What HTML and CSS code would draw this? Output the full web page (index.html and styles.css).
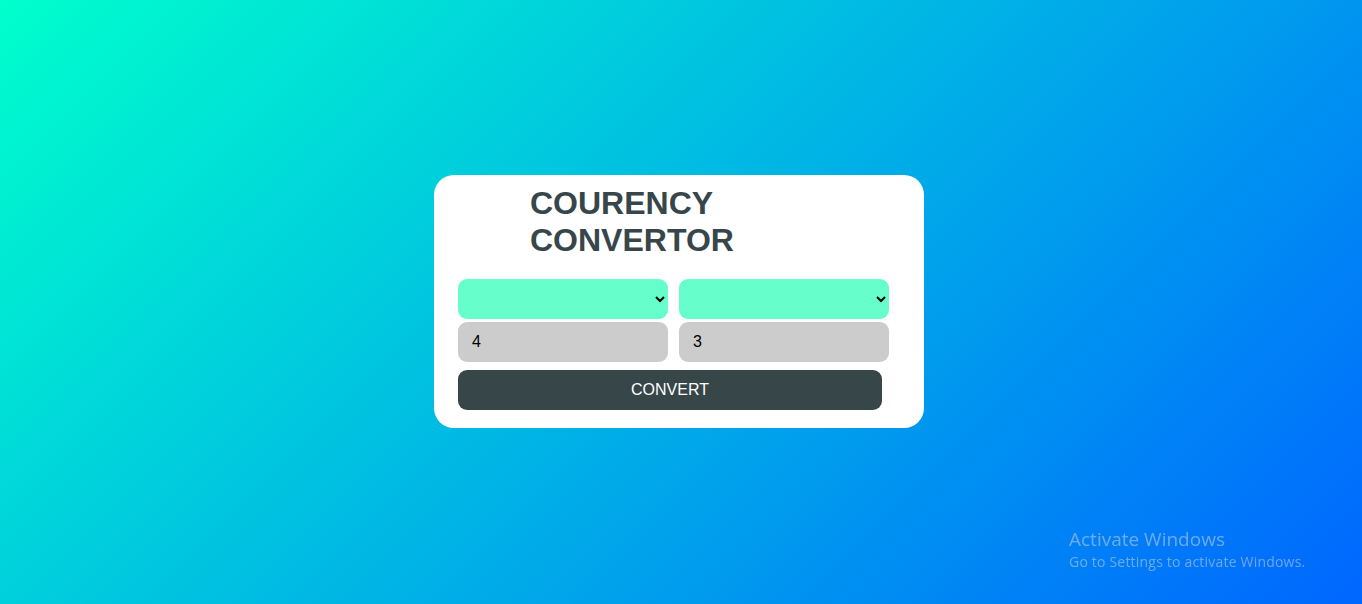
FILE: index.html
```html
<!DOCTYPE html>
<html lang="en">
<head>
<meta charset="utf-8">
<title>Courency Convertor</title>
<link rel="stylesheet" href="styles.css">
</head>
<body>
<main class="page">
  <section class="card">
    <h1 class="title">COURENCY<br>CONVERTOR</h1>
    <div class="row">
      <select class="field select"><option></option></select>
      <select class="field select"><option></option></select>
    </div>
    <div class="row">
      <input class="field input" type="text" value="4">
      <input class="field input" type="text" value="3">
    </div>
    <button class="btn">CONVERT</button>
  </section>
</main>
<div class="activate">
  <div class="act-title">Activate Windows</div>
  <div class="act-sub">Go to Settings to activate Windows.</div>
</div>
</body>
</html>
```

FILE: styles.css
```css
* { box-sizing: border-box; }
html, body { margin: 0; height: 100%; }
body {
  background: linear-gradient(135deg, #00ffcc 0%, #0066ff 100%);
  font-family: "Liberation Sans", Arial, sans-serif;
  overflow: hidden;
}
.page {
  height: 100vh;
  display: flex;
  align-items: center;
  justify-content: center;
  padding-right: 4px;
  padding-bottom: 2px;
}
.card {
  width: 490px;
  background: #ffffff;
  border-radius: 20px;
  padding: 10px 35px 18px 24px;
  display: flex;
  flex-direction: column;
}
.title {
  margin: 0 0 20px 0;
  padding-left: 72px;
  font-size: 32px;
  font-weight: bold;
  line-height: 37px;
  color: #374649;
}
.row {
  display: flex;
  gap: 11px;
  margin-bottom: 3px;
}
.field {
  width: 210px;
  height: 40px;
  border: none;
  border-radius: 9px;
  font-family: "Liberation Sans", Arial, sans-serif;
  font-size: 16px;
  outline: none;
}
.select {
  background: #66ffcc;
  color: #000;
  padding: 0 4px;
}
.input {
  background: #cccccc;
  color: #000;
  padding: 0 14px;
}
.btn {
  margin-top: 5px;
  width: 424px;
  height: 40px;
  border: none;
  border-radius: 9px;
  background: #374649;
  color: #ffffff;
  font-family: "Liberation Sans", Arial, sans-serif;
  font-size: 16px;
}
.activate {
  position: fixed;
  left: 1069px;
  top: 527px;
  color: rgba(200, 210, 220, 0.55);
  font-family: "Open Sans", "Noto Sans", sans-serif;
}
.act-title { font-size: 19px; line-height: 24px; }
.act-sub { font-size: 14px; line-height: 21px; letter-spacing: 0.2px; }
```
